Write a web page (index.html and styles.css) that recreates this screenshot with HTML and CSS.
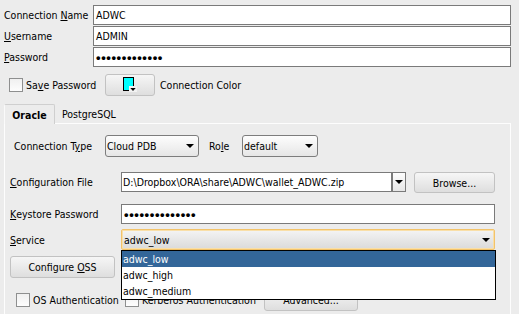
FILE: index.html
```
<!DOCTYPE html>
<html>
<head>
<meta charset="utf-8">
<link rel="stylesheet" href="styles.css">
</head>
<body>
<div class="dialog">
  <div class="fields">
    <div class="frow"><span class="lbl">Connection <u>N</u>ame</span><div class="tf">ADWC</div></div>
    <div class="frow"><span class="lbl"><u>U</u>sername</span><div class="tf">ADMIN</div></div>
    <div class="frow"><span class="lbl"><u>P</u>assword</span><div class="tf"><span class="dots">•••••••••••••</span></div></div>
  </div>
  <div class="saverow">
    <span class="cb"></span><span class="cblbl">Sa<u>v</u>e Password</span>
    <span class="btn colorbtn"><svg width="15" height="15" viewBox="0 0 15 15"><rect x="0.5" y="0.5" width="10" height="13" fill="#00ffff" stroke="#000"/><rect x="6" y="9" width="8" height="6" fill="#f2f2f2"/><polygon points="7.3,11 12.7,11 10,14" fill="#000"/></svg></span>
    <span class="colorlbl">Connection Color</span>
  </div>
  <div class="tabs"><span class="tab active">Oracle</span><span class="tab">PostgreSQL</span></div>
  <div class="panel">
    <div class="typerow">
      <span class="tlbl">Connection T<u>y</u>pe</span>
      <span class="combo ctype">Cloud PDB<i class="arrow"></i></span>
      <span class="rlbl">Ro<u>l</u>e</span>
      <span class="combo crole">default<i class="arrow"></i></span>
    </div>
    <div class="prow cfg">
      <span class="plbl"><u>C</u>onfiguration File</span>
      <span class="tf cfgtf">D:\Dropbox\ORA\share\ADWC\wallet_ADWC.zip</span>
      <span class="dd"><i class="arrow"></i></span>
      <span class="btn browse">Browse...</span>
    </div>
    <div class="prow ks">
      <span class="plbl"><u>K</u>eystore Password</span>
      <span class="tf kstf"><span class="dots">••••••••••••••</span></span>
    </div>
    <div class="prow svc">
      <span class="plbl"><u>S</u>ervice</span>
      <div class="svcwrap">
        <div class="combo focus">adwc_low<i class="arrow"></i></div>
        <ul class="list"><li class="sel">adwc_low</li><li>adwc_high</li><li>adwc_medium</li></ul>
      </div>
    </div>
    <div class="ossrow"><span class="btn oss"><span>Configure <u>O</u>SS</span></span></div>
    <div class="authrow">
      <span class="cb cb1"></span><span class="alb alb1">OS Authentication</span>
      <span class="cb cb2"></span><span class="alb alb2">Kerberos Authentication</span>
      <span class="btn adv">Advanced...</span>
    </div>
  </div>
</div>
</body>
</html>
```
FILE: styles.css
```
html, body { margin: 0; padding: 0; }
body {
  background: #ececec;
  font-family: "DejaVu Sans Condensed", "DejaVu Sans", sans-serif;
  font-size: 10.5px;
  color: #000;
  width: 519px;
  height: 314px;
  overflow: hidden;
}
u { text-decoration: underline; text-underline-offset: 1px; }
.dialog { padding: 5px 8px 0 4px; }
.fields { display: flex; flex-direction: column; gap: 1px; }
.frow { display: flex; align-items: center; height: 20px; }
.lbl { width: 89px; white-space: nowrap; flex: none; }
.tf {
  box-sizing: border-box;
  height: 20px;
  border: 1px solid #7a7a7a;
  background: #fff;
  padding-left: 2px;
  display: flex;
  align-items: center;
  white-space: nowrap;
  overflow: hidden;
}
.frow .tf { flex: 1; }
.dots { font-family: "Liberation Sans", sans-serif; font-size: 13px; font-weight: bold; letter-spacing: 0.6px; line-height: 1; }

.saverow { display: flex; align-items: center; height: 22px; margin-top: 7px; padding-left: 5px; }
.cb {
  box-sizing: border-box;
  width: 14px; height: 14px;
  border: 1px solid #8e8f8f;
  background: linear-gradient(#f0f0f0, #fdfdfd);
  flex: none;
}
.cblbl { margin-left: 3px; width: 79px; flex: none; }
.btn {
  box-sizing: border-box;
  display: flex; align-items: center; justify-content: center;
  border: 1px solid #c2c2c2;
  border-radius: 3px;
  background: linear-gradient(#f6f6f6, #dedede);
  white-space: nowrap;
  flex: none;
}
.colorbtn { width: 50px; height: 22px; }
.colorbtn svg { display: block; margin-top: -1px; }
.colorlbl { margin-left: 5px; }

.tabs { display: flex; height: 19px; margin-top: 8px; position: relative; z-index: 1; }
.tab { display: flex; align-items: center; box-sizing: border-box; }
.tab.active {
  width: 51px; height: 20px;
  justify-content: center;
  font-weight: bold;
  border: 1px solid #cfcfcf;
  border-left-color: #fafafa;
  border-bottom: none;
  border-radius: 2px 2px 0 0;
  background: #ececec;
}
.tab + .tab { padding-left: 7px; }

.panel {
  box-sizing: border-box;
  height: 191px;
  border: 1px solid #fdfdfd;
  border-bottom: none;
  padding-left: 5px;
  position: relative;
}
.typerow { display: flex; align-items: center; height: 22px; margin-top: 11px; }
.tlbl { width: 95px; padding-left: 4px; box-sizing: border-box; flex: none; }
.combo {
  box-sizing: border-box;
  display: flex; align-items: center;
  height: 22px;
  border: 1px solid #7d7d7d;
  border-radius: 3px;
  background: linear-gradient(#fdfdfd, #e6e6e6);
  padding: 0 4px 0 1px;
  flex: none;
}
.ctype { width: 94px; }
.rlbl { width: 33px; margin-left: 10px; flex: none; }
.crole { width: 76px; }
.arrow {
  margin-left: auto;
  width: 0; height: 0;
  border-left: 4px solid transparent;
  border-right: 4px solid transparent;
  border-top: 4px solid #000;
}
.prow { display: flex; align-items: flex-start; }
.plbl { width: 111px; flex: none; height: 20px; display: flex; align-items: center; }
.cfg { margin-top: 15px; height: 21px; }
.cfgtf { width: 271px; padding-left: 1px; flex: none; }
.dd {
  box-sizing: border-box;
  width: 14px; height: 20px;
  border: 1px solid #7a7a7a;
  background: linear-gradient(#fdfdfd, #e6e6e6);
  display: flex; align-items: center; justify-content: center;
  flex: none;
}
.dd .arrow { margin: 0; }
.browse { width: 81px; height: 21px; margin-left: 8px; }
.ks { margin-top: 11px; }
.kstf { width: 374px; flex: none; }
.svc { margin-top: 5px; }
.svc .plbl { height: 21px; }
.svcwrap { position: relative; width: 374px; flex: none; }
.combo.focus {
  height: 21px;
  border: 1px solid #f3c36a;
  box-shadow: inset 0 0 0 1px #f9dfa8;
  border-radius: 2px;
  background: linear-gradient(#f4f4f4, #dadada);
  padding-left: 2px;
}
.list {
  position: absolute;
  top: 21px; left: 0;
  width: 375px;
  margin: 0; padding: 0;
  list-style: none;
  box-sizing: border-box;
  border: 1px solid #000;
  background: #fff;
  z-index: 5;
}
.list li { height: 16px; line-height: 16px; padding-left: 1px; }
.list li.sel { background: #336699; color: #fff; }
.ossrow { margin-top: 6px; display: flex; }
.oss { width: 105px; height: 22px; }
.authrow { display: flex; align-items: center; height: 22px; margin-top: 11px; }
.cb1 { margin-left: 6px; }
.cb2 { margin-left: 2px; }
.alb { margin-left: 3px; white-space: nowrap; flex: none; }
.alb1 { width: 90px; }
.alb2 { width: 122px; }
.adv { width: 94px; height: 22px; margin-left: 0; }
```
